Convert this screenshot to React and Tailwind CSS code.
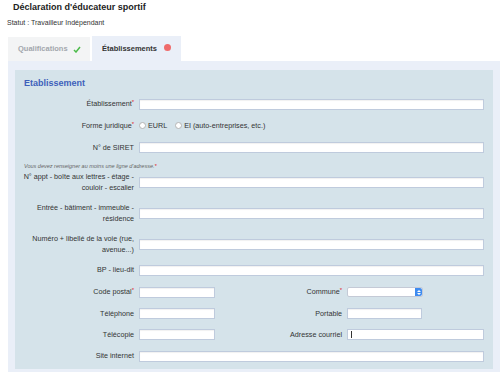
const Req = () => <span className="text-[#e0202a] text-[6px] align-top leading-none">*</span>;

function Field({ w }) {
  return (
    <div
      className={`h-[11px] bg-white border border-[#bfcbdd] shadow-[inset_0_1px_1px_rgba(0,0,0,0.06)] ${w || "flex-1"}`}
    />
  );
}

function Row({ h, label, req, children, twoLine }) {
  return (
    <div className={`flex items-center gap-[5px] ${h}`}>
      <div
        className={`w-[119px] shrink-0 text-right text-[#333] ${
          twoLine ? "leading-[11px]" : "leading-[10px]"
        }`}
      >
        {label}
        {req && <Req />}
      </div>
      {children}
    </div>
  );
}

function Radio({ label }) {
  return (
    <div className="flex items-center gap-[2px]">
      <span className="w-[7px] h-[7px] rounded-full bg-white border border-[#b5b5b5]" />
      <span className="text-[#333]">{label}</span>
    </div>
  );
}

function Select() {
  return (
    <div className="w-[76px] h-[10px] flex bg-white border border-[#c4cad6] rounded-[2px]">
      <div className="flex-1" />
      <div className="w-[7px] h-full bg-[#3f8cf0] rounded-r-[2px] flex flex-col items-center justify-center gap-[1px]">
        <svg width="4" height="2" viewBox="0 0 4 2">
          <path d="M0 2 L2 0 L4 2 Z" fill="#fff" />
        </svg>
        <svg width="4" height="2" viewBox="0 0 4 2">
          <path d="M0 0 L2 2 L4 0 Z" fill="#fff" />
        </svg>
      </div>
    </div>
  );
}

function SplitRow({ h, label, req, left, label2, req2, right }) {
  return (
    <div className={`flex items-center ${h}`}>
      <div className="w-[119px] shrink-0 text-right text-[#333] leading-[10px]">
        {label}
        {req && <Req />}
      </div>
      <div className="ml-[5px]">{left}</div>
      <div className="w-[127px] shrink-0 text-right text-[#333] leading-[10px]">
        {label2}
        {req2 && <Req />}
      </div>
      <div className="ml-[5px] flex-1 flex">{right}</div>
    </div>
  );
}

export default function App() {
  return (
    <div
      className="w-[500px] h-[372px] overflow-hidden bg-white flex flex-col"
      style={{ fontFamily: '"Liberation Sans", Arial, sans-serif' }}
    >
      {/* Header */}
      <div className="pl-[13px] pt-[2px] text-[9px] leading-[11px] font-bold text-[#222]">
        Déclaration d'éducateur sportif
      </div>
      <div className="pl-[7px] mt-[5px] text-[7px] leading-[9px] text-[#333]">
        Statut : Travailleur Indépendant
      </div>

      {/* Tabs */}
      <div className="flex items-end gap-[2px] ml-[8px] mt-[9px] text-[7.5px] font-bold">
        <div className="w-[82px] h-[24px] bg-[#f3f4f5] flex items-center pl-[10px] gap-[5px] text-[#a3a7ad]">
          Qualifications
          <svg width="8" height="7" viewBox="0 0 8 7">
            <path d="M1 4 L3 6 L7 1" stroke="#4cbb4a" strokeWidth="1.5" fill="none" />
          </svg>
        </div>
        <div className="w-[89px] h-[25px] bg-[#eaeff8] flex items-center pl-[10px] text-[#333]">
          Établissements
          <span className="ml-[7px] w-[7px] h-[7px] rounded-full bg-[#ef6b6b] -mt-[2px]" />
        </div>
      </div>

      {/* Outer panel */}
      <div className="flex-1 ml-[8px] bg-[#eaeff8] pt-[9px] pl-[7px] pr-[7px]">
        <div className="h-[299px] bg-[#d5e3ea] pt-[8px] pr-[9px] text-[7.2px]">
          <div className="pl-[9px] text-[9px] leading-[11px] font-bold text-[#3e5fba]">
            Etablissement
          </div>
          <div className="mt-[4px] flex flex-col">
            <Row h="h-[22px]" label="Établissement" req>
              <Field />
            </Row>
            <Row h="h-[22px]" label="Forme juridique" req>
              <div className="flex items-center gap-[8px]">
                <Radio label="EURL" />
                <Radio label="EI (auto-entreprises, etc.)" />
              </div>
            </Row>
            <Row h="h-[21px]" label="N° de SIRET">
              <Field />
            </Row>
            <div className="mt-[4px] pl-[9px] h-[8px] text-[5.5px] leading-[8px] italic text-[#666]">
              Vous devez renseigner au moins une ligne d'adresse.
              <span className="text-[#e0202a]">*</span>
            </div>
            <Row h="h-[24px]" twoLine label={<>N° appt - boîte aux lettres - étage -<br />couloir - escalier</>}>
              <Field />
            </Row>
            <div className="h-[7px]" />
            <Row h="h-[24px]" twoLine label={<>Entrée - bâtiment - immeuble -<br />résidence</>}>
              <Field />
            </Row>
            <div className="h-[7px]" />
            <Row h="h-[24px]" twoLine label={<>Numéro + libellé de la voie (rue,<br />avenue...)</>}>
              <Field />
            </Row>
            <div className="h-[3px]" />
            <Row h="h-[22px]" label="BP - lieu-dit">
              <Field />
            </Row>
            <SplitRow
              h="h-[22px]"
              label="Code postal"
              req
              left={<Field w="w-[76px]" />}
              label2="Commune"
              req2
              right={<Select />}
            />
            <SplitRow
              h="h-[21px]"
              label="Téléphone"
              left={<Field w="w-[76px]" />}
              label2="Portable"
              right={<Field w="w-[75px]" />}
            />
            <SplitRow
              h="h-[21px]"
              label="Télécopie"
              left={<Field w="w-[76px]" />}
              label2="Adresse courriel"
              right={
                <div className="flex-1 h-[11px] bg-white border border-[#bfcbdd] flex items-center pl-[3px]">
                  <span className="w-px h-[7px] bg-[#333]" />
                </div>
              }
            />
            <Row h="h-[22px]" label="Site internet">
              <Field />
            </Row>
          </div>
        </div>
      </div>
    </div>
  );
}
